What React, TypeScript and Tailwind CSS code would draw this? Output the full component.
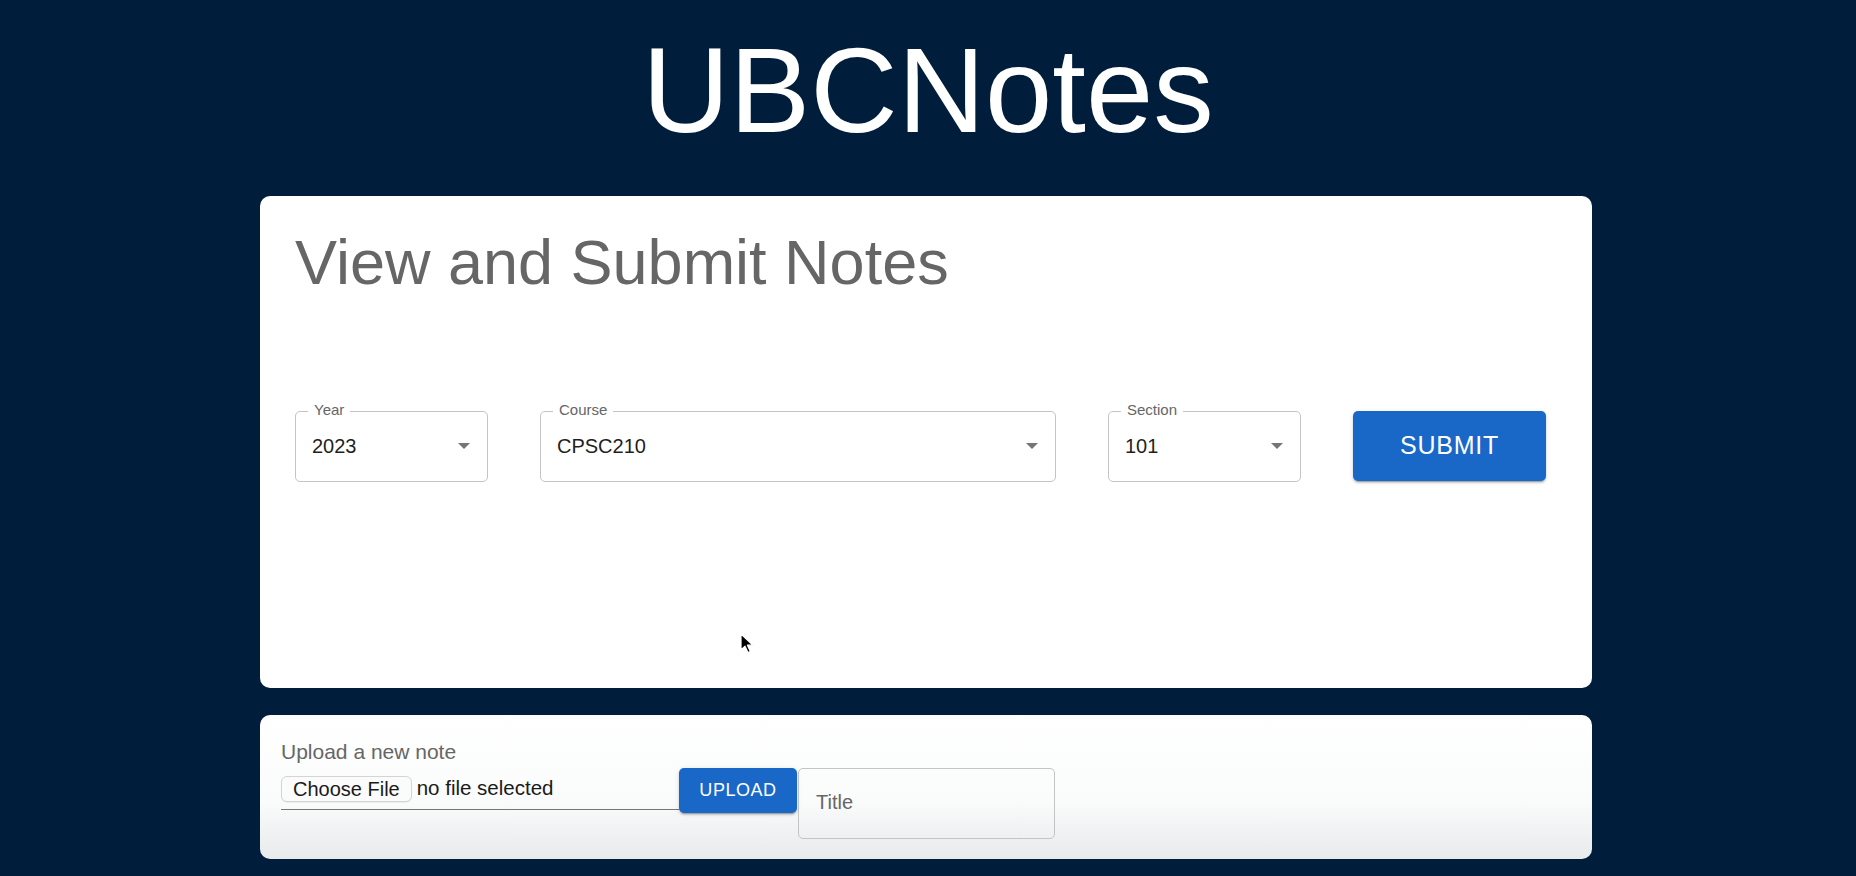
import React from "react";

const fields = [
  { label: "Year", value: "2023", width: "w-[193px]" },
  { label: "Course", value: "CPSC210", width: "w-[516px]" },
  { label: "Section", value: "101", width: "w-[193px]" },
];

function DropArrow() {
  return (
    <svg width="12" height="6" viewBox="0 0 12 6" className="shrink-0">
      <path d="M0 0h12L6 6z" fill="#757575" />
    </svg>
  );
}

function SelectField({ label, value, width }: { label: string; value: string; width: string }) {
  return (
    <div
      className={`relative ${width} h-[71px] rounded-[5px] border border-[#c4c4c4] flex items-center justify-between pl-[16px] pr-[17px] pb-[1px]`}
    >
      <span className="absolute left-[12px] -top-[10px] bg-white px-[6px] text-[15px] leading-none text-[#666]">
        {label}
      </span>
      <span className="text-[20px] text-[#1f1f1f]">{value}</span>
      <DropArrow />
    </div>
  );
}

function Cursor() {
  return (
    <svg width="14" height="21" viewBox="0 0 14 21" className="absolute left-[480px] top-[437px]">
      <path
        d="M1 1v16l4-3.8 3 6.3 2.4-1.1-3-6.2H13z"
        fill="#000"
        stroke="#fff"
        strokeWidth="1.2"
        strokeLinejoin="round"
      />
    </svg>
  );
}

export default function App() {
  return (
    <div className="min-h-screen bg-[#011d3c] font-[family-name:Liberation_Sans,Arial,sans-serif] pb-[17px]">
      {/* Header */}
      <h1 className="pt-[30px] mb-[45px] text-center text-[121px] leading-none text-white">
        UBCNotes
      </h1>

      {/* View / submit */}
      <section className="relative ml-[260px] w-[1332px] h-[492px] rounded-[10px] bg-white pl-[35px] pt-[29px]">
        <h2 className="text-[63px] leading-[1.2] text-[#666]">View and Submit Notes</h2>

        <div className="mt-[110px] flex items-start gap-[52px]">
          {fields.map((f) => (
            <SelectField key={f.label} {...f} />
          ))}
          <button className="w-[193px] h-[70px] rounded-[5px] bg-[#1968c8] text-white text-[25px] uppercase tracking-[0.03em] shadow-[0_3px_1px_-2px_rgba(0,0,0,0.2),0_2px_2px_0_rgba(0,0,0,0.14),0_1px_5px_0_rgba(0,0,0,0.12)]">
            Submit
          </button>
        </div>

        <Cursor />
      </section>

      {/* Upload */}
      <section className="ml-[260px] mt-[27px] w-[1332px] h-[144px] rounded-[10px] bg-[linear-gradient(180deg,#ffffff_0%,#fafbfb_60%,#e8eaeb_100%)] pl-[21px] pt-[26px]">
        <div className="text-[21px] leading-none text-[#666]">Upload a new note</div>
        <div className="mt-[6px] flex items-start">
          <div className="w-[398px] h-[42px] border-b border-[#777] flex items-center">
            <span className="h-[26px] px-[11px] rounded-[6px] border border-[#d4d4d4] bg-[#fbfbfb] shadow-[0_1px_1px_rgba(0,0,0,0.06)] flex items-center text-[20px] text-[#1a1a1a]">
              Choose File
            </span>
            <span className="ml-[5px] text-[20.5px] text-[#1a1a1a]">no file selected</span>
          </div>
          <button className="w-[118px] h-[45px] rounded-[5px] bg-[#1968c8] text-white text-[18px] uppercase tracking-[0.03em] shadow-[0_3px_1px_-2px_rgba(0,0,0,0.2),0_2px_2px_0_rgba(0,0,0,0.14),0_1px_5px_0_rgba(0,0,0,0.12)]">
            Upload
          </button>
          <div className="ml-[1px] w-[257px] h-[71px] rounded-[5px] border border-[#c4c4c4] flex items-center pl-[17px] pb-[3px] text-[20px] text-[#666]">
            Title
          </div>
        </div>
      </section>
    </div>
  );
}
